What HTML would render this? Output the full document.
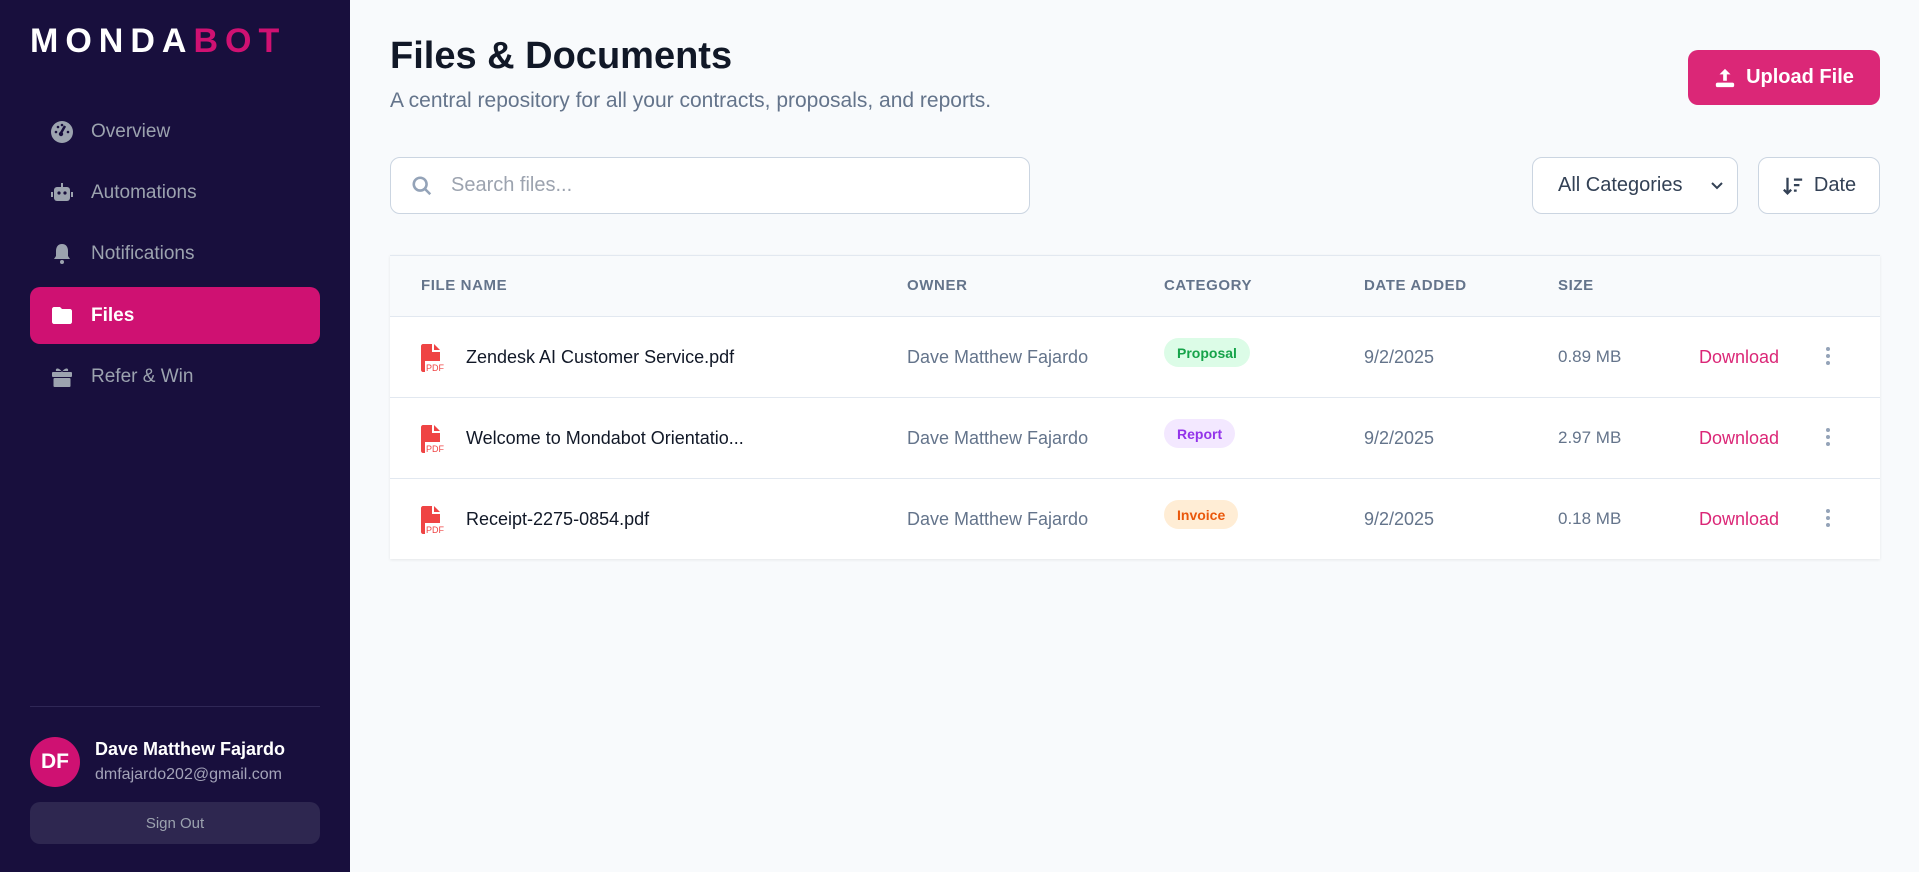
<!DOCTYPE html>
<html><head><meta charset="utf-8"><style>
*{box-sizing:border-box;margin:0;padding:0}
body{width:1919px;height:872px;font-family:"Liberation Sans",sans-serif;background:#f8fafc;position:relative;overflow:hidden}
.sb{position:absolute;left:0;top:0;width:350px;height:872px;background:#180f3d}
.logo{position:absolute;left:30px;top:22px;font-size:34px;font-weight:bold;letter-spacing:7px;color:#fff}
.logo span{color:#cf1172}
.nav{position:absolute;left:30px;width:290px;height:57px;display:flex;align-items:center;padding-left:20px;color:#9ca3af;font-size:19px;border-radius:10px}
.nav svg{width:24px;height:24px;margin-right:17px;fill:#9ca3af}
.nav.act{background:#cf1172;color:#fff;font-weight:bold}
.nav.act svg{fill:#fff}
.div{position:absolute;left:30px;top:706px;width:290px;height:1px;background:#2f2756}
.av{position:absolute;left:30px;top:737px;width:50px;height:50px;border-radius:50%;background:#cf1172;color:#fff;font-weight:bold;font-size:21px;display:flex;align-items:center;justify-content:center}
.un{position:absolute;left:95px;top:739px;color:#fff;font-weight:bold;font-size:18px}
.ue{position:absolute;left:95px;top:766px;color:#a3a3b8;font-size:16px}
.so{position:absolute;left:30px;top:802px;width:290px;height:42px;border-radius:10px;background:#2e2750;color:#9ca3af;font-size:15px;display:flex;align-items:center;justify-content:center}
h1{position:absolute;left:390px;top:35px;font-size:38px;color:#111827;font-weight:bold}
.sub{position:absolute;left:390px;top:89px;font-size:21px;color:#64748b}
.up{position:absolute;left:1688px;top:50px;width:192px;height:55px;border-radius:10px;background:#db2777;color:#fff;font-weight:bold;font-size:20px;display:flex;align-items:center;justify-content:center;gap:10px}
.search{position:absolute;left:390px;top:157px;width:640px;height:57px;border:1px solid #cbd5e1;border-radius:10px;background:#fff;display:flex;align-items:center;padding-left:20px;color:#9ca3af;font-size:20px}
.sel{position:absolute;left:1532px;top:157px;width:206px;height:57px;border:1px solid #cbd5e1;border-radius:10px;background:#fff;display:flex;align-items:center;padding-left:25px;color:#334155;font-size:20px}
.dt{position:absolute;left:1758px;top:157px;width:122px;height:57px;border:1px solid #cbd5e1;border-radius:10px;background:#fff;display:flex;align-items:center;justify-content:center;gap:10px;color:#334155;font-size:20px}
.tbl{position:absolute;left:390px;top:255px;width:1490px;height:304px;background:#fff;box-shadow:0 1px 3px rgba(0,0,0,.08);border-top:1px solid #e2e8f0}
.hd{position:absolute;left:0;top:0;width:100%;height:61px;background:#f8fafc;border-bottom:1px solid #e2e8f0}
.th{position:absolute;top:21px;font-size:15px;font-weight:bold;color:#64748b;letter-spacing:.6px}
.row{position:absolute;left:0;width:100%;height:81px;border-bottom:1px solid #e2e8f0}
.c{position:absolute;top:30px;font-size:18px;color:#64748b}
.fn{color:#111827;left:76px}
.pdf{position:absolute;left:31px;top:27px}
.bd{position:absolute;top:21px;height:29px;border-radius:15px;font-size:14px;font-weight:bold;display:flex;align-items:center;padding:0 13px}
.dl{color:#db2777}
.dots{position:absolute;left:1436px;top:30px;width:4px}
.dots i{display:block;width:4px;height:4px;border-radius:50%;background:#94a3b8;margin-bottom:3px}
</style></head><body>
<div class="sb">
<div class="logo">MONDA<span>BOT</span></div>
<div class="nav" style="top:103px"><svg viewBox="0 0 24 24"><circle cx="12" cy="12" r="11"/><path d="M11 13 L15 6" stroke="#180f3d" stroke-width="2.5"/><circle cx="11" cy="14" r="2.2" fill="#180f3d"/><circle cx="6" cy="12" r="1.3" fill="#180f3d"/><circle cx="8" cy="7" r="1.3" fill="#180f3d"/><circle cx="12" cy="5" r="1.3" fill="#180f3d"/><circle cx="18" cy="12" r="1.3" fill="#180f3d"/></svg>Overview</div>
<div class="nav" style="top:164px"><svg viewBox="0 0 24 24"><rect x="4" y="6" width="16" height="14" rx="3"/><rect x="11" y="2" width="2" height="4"/><rect x="1" y="11" width="2" height="5"/><rect x="21" y="11" width="2" height="5"/><circle cx="9" cy="12" r="1.6" fill="#180f3d"/><circle cx="15" cy="12" r="1.6" fill="#180f3d"/></svg>Automations</div>
<div class="nav" style="top:225px"><svg viewBox="0 0 24 24"><path d="M12 2c-4 0-6 3-6 7v5l-2 3h16l-2-3V9c0-4-2-7-6-7z"/><circle cx="12" cy="20" r="2"/></svg>Notifications</div>
<div class="nav act" style="top:287px"><svg viewBox="0 0 24 24"><path d="M2 5c0-1 1-2 2-2h6l2 2h8c1 0 2 1 2 2v11c0 1-1 2-2 2H4c-1 0-2-1-2-2z"/></svg>Files</div>
<div class="nav" style="top:348px"><svg viewBox="0 0 24 24"><rect x="2" y="7" width="20" height="5" rx="1"/><rect x="3.5" y="13" width="17" height="9" rx="1"/><path d="M12 7C9 2 5 3 6 6h6zM12 7c3-5 7-4 6-1h-6z"/></svg>Refer &amp; Win</div>
<div class="div"></div>
<div class="av">DF</div>
<div class="un">Dave Matthew Fajardo</div>
<div class="ue">dmfajardo202@gmail.com</div>
<div class="so">Sign Out</div>
</div>
<h1>Files &amp; Documents</h1>
<div class="sub">A central repository for all your contracts, proposals, and reports.</div>
<div class="up"><svg width="22" height="22" viewBox="0 0 24 24" fill="#fff"><path d="M12 2l-6 6h4v7h4V8h4z"/><rect x="2" y="17" width="20" height="5" rx="2"/></svg>Upload File</div>
<div class="search"><svg width="22" height="22" viewBox="0 0 24 24" fill="none" stroke="#94a3b8" stroke-width="2.8"><circle cx="10" cy="10" r="7"/><path d="M15 15l6 6"/></svg><span style="margin-left:18px">Search files...</span></div>
<div class="sel">All Categories<svg style="position:absolute;right:14px" width="12" height="8" viewBox="0 0 12 8" fill="none" stroke="#334155" stroke-width="2"><path d="M1 1l5 5 5-5"/></svg></div>
<div class="dt"><svg width="22" height="22" viewBox="0 0 24 24" fill="none" stroke="#334155" stroke-width="2.5"><path d="M6 3v17M2 16l4 4 4-4M13 5h9M13 11h6M13 17h3"/></svg>Date</div>
<div class="tbl">
<div class="hd">
<div class="th" style="left:31px">FILE NAME</div>
<div class="th" style="left:517px">OWNER</div>
<div class="th" style="left:774px">CATEGORY</div>
<div class="th" style="left:974px">DATE ADDED</div>
<div class="th" style="left:1168px">SIZE</div>
</div>
<div class="row" style="top:61px">
<svg class="pdf" width="24" height="28" viewBox="0 0 24 28"><path d="M0 2c0-1 1-2 2-2h9v8h8v9H4v11H2c-1 0-2-1-2-2z" fill="#ef4444"/><path d="M13 0l6 6h-6z" fill="#ef4444"/><text x="5" y="27" font-size="9" fill="#ef4444" font-family="Liberation Sans">PDF</text></svg>
<div class="c fn">Zendesk AI Customer Service.pdf</div><div class="c" style="left:517px">Dave Matthew Fajardo</div>
<div class="bd" style="left:774px;background:#dcfce7;color:#16a34a">Proposal</div>
<div class="c" style="left:974px">9/2/2025</div><div class="c" style="left:1168px;font-size:17px">0.89 MB</div><div class="c dl" style="left:1309px">Download</div><div class="dots"><i></i><i></i><i></i></div></div>
<div class="row" style="top:142px">
<svg class="pdf" width="24" height="28" viewBox="0 0 24 28"><path d="M0 2c0-1 1-2 2-2h9v8h8v9H4v11H2c-1 0-2-1-2-2z" fill="#ef4444"/><path d="M13 0l6 6h-6z" fill="#ef4444"/><text x="5" y="27" font-size="9" fill="#ef4444" font-family="Liberation Sans">PDF</text></svg>
<div class="c fn">Welcome to Mondabot Orientatio...</div><div class="c" style="left:517px">Dave Matthew Fajardo</div>
<div class="bd" style="left:774px;background:#f3e8ff;color:#9333ea">Report</div>
<div class="c" style="left:974px">9/2/2025</div><div class="c" style="left:1168px;font-size:17px">2.97 MB</div><div class="c dl" style="left:1309px">Download</div><div class="dots"><i></i><i></i><i></i></div></div>
<div class="row" style="top:223px;border-bottom:none">
<svg class="pdf" width="24" height="28" viewBox="0 0 24 28"><path d="M0 2c0-1 1-2 2-2h9v8h8v9H4v11H2c-1 0-2-1-2-2z" fill="#ef4444"/><path d="M13 0l6 6h-6z" fill="#ef4444"/><text x="5" y="27" font-size="9" fill="#ef4444" font-family="Liberation Sans">PDF</text></svg>
<div class="c fn">Receipt-2275-0854.pdf</div><div class="c" style="left:517px">Dave Matthew Fajardo</div>
<div class="bd" style="left:774px;background:#ffedd5;color:#ea580c">Invoice</div>
<div class="c" style="left:974px">9/2/2025</div><div class="c" style="left:1168px;font-size:17px">0.18 MB</div><div class="c dl" style="left:1309px">Download</div><div class="dots"><i></i><i></i><i></i></div></div>
</div>
</body></html>
